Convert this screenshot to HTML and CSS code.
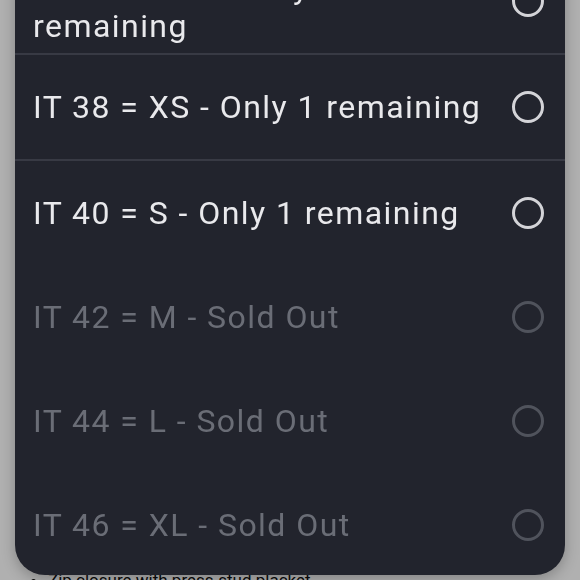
FILE: index.html
```html
<!DOCTYPE html>
<html lang="en">
<head>
<meta charset="utf-8">
<title>Select size</title>
<link rel="stylesheet" href="styles.css">
</head>
<body>
<div class="page">
  <ul class="details">
    <li>Zip closure with press-stud placket</li>
  </ul>
</div>
<div class="scrim"></div>
<div class="dialog" role="dialog">
  <div class="option divided wrap">
    <span class="label">IT 36 = XXS - Only 1 remaining</span>
    <span class="radio"></span>
  </div>
  <div class="option divided">
    <span class="label">IT 38 = XS - Only 1 remaining</span>
    <span class="radio"></span>
  </div>
  <div class="option">
    <span class="label">IT 40 = S - Only 1 remaining</span>
    <span class="radio"></span>
  </div>
  <div class="option disabled">
    <span class="label">IT 42 = M - Sold Out</span>
    <span class="radio"></span>
  </div>
  <div class="option disabled">
    <span class="label">IT 44 = L - Sold Out</span>
    <span class="radio"></span>
  </div>
  <div class="option disabled">
    <span class="label">IT 46 = XL - Sold Out</span>
    <span class="radio"></span>
  </div>
</div>
</body>
</html>
```
FILE: styles.css
```css
html, body {
  margin: 0;
  padding: 0;
  background: #ffffff;
  font-family: Roboto, "Noto Sans", sans-serif;
  overflow: hidden;
}

.page {
  padding: 568px 0 0 30px;
  color: #111111;
  font-size: 17px;
  line-height: 24px;
}

.details {
  margin: 0;
  padding: 0 0 0 18px;
}

.scrim {
  position: fixed;
  inset: 0;
  background: rgba(0, 0, 0, 0.31);
}

.dialog {
  position: fixed;
  left: 15px;
  right: 15px;
  top: -51px;
  bottom: 5px;
  background: #22242d;
  border-radius: 30px;
  overflow: hidden;
  box-shadow: 0 4px 14px rgba(0, 0, 0, 0.25);
}

.option {
  display: flex;
  align-items: center;
  gap: 22px;
  min-height: 104px;
  padding: 0 21px 0 18px;
  color: #e9e9ec;
  font-size: 32px;
  line-height: 38px;
  letter-spacing: 1.45px;
}

.option.divided {
  border-bottom: 2px solid #383a44;
}

.option.wrap {
  align-items: flex-end;
  padding-bottom: 8px;
  min-height: 96px;
}

.option.wrap .radio {
  align-self: center;
  margin-top: 8px;
}

.label {
  flex: 1;
}

.radio {
  flex: none;
  width: 26px;
  height: 26px;
  border: 3px solid #d4d4d8;
  border-radius: 50%;
}

.option.disabled {
  color: #6a6d76;
}

.option.disabled .radio {
  border-color: #50535c;
}
```
